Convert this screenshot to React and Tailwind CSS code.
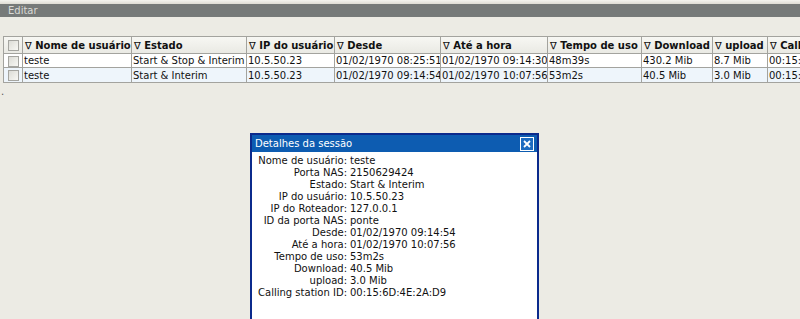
import React from "react";

const cols = [
  { label: "Nome de usuário", w: 109 },
  { label: "Estado", w: 115 },
  { label: "IP do usuário", w: 88 },
  { label: "Desde", w: 106 },
  { label: "Até a hora", w: 107 },
  { label: "Tempo de uso", w: 94 },
  { label: "Download", w: 71 },
  { label: "upload", w: 55 },
  { label: "Calling station ID", w: 130 },
];

const rows = [
  ["teste", "Start & Stop & Interim", "10.5.50.23", "01/02/1970 08:25:51", "01/02/1970 09:14:30", "48m39s", "430.2 Mib", "8.7 Mib", "00:15:6D:4E:2A:D9"],
  ["teste", "Start & Interim", "10.5.50.23", "01/02/1970 09:14:54", "01/02/1970 10:07:56", "53m2s", "40.5 Mib", "3.0 Mib", "00:15:6D:4E:2A:D9"],
];

const details = [
  ["Nome de usuário", "teste"],
  ["Porta NAS", "2150629424"],
  ["Estado", "Start & Interim"],
  ["IP do usuário", "10.5.50.23"],
  ["IP do Roteador", "127.0.0.1"],
  ["ID da porta NAS", "ponte"],
  ["Desde", "01/02/1970 09:14:54"],
  ["Até a hora", "01/02/1970 10:07:56"],
  ["Tempo de uso", "53m2s"],
  ["Download", "40.5 Mib"],
  ["upload", "3.0 Mib"],
  ["Calling station ID", "00:15:6D:4E:2A:D9"],
];

function Box() {
  return (
    <span className="inline-block w-[11px] h-[11px] border border-[#a5a5a0] bg-gradient-to-br from-[#dcdcd6] to-[#f8f8f4] align-middle" />
  );
}

export default function App() {
  return (
    <div
      className="relative w-[800px] h-[319px] overflow-hidden bg-[#ecebe4] text-[10px] text-[#111]"
      style={{ fontFamily: '"DejaVu Sans", Verdana, sans-serif' }}
    >
      <div className="h-[4px] bg-gradient-to-b from-[#f4f4ef] to-[#dedcd4]" />
      <div className="h-[13px] bg-[#767a79] text-[#d9d9d6] pl-[8px] leading-[13px]">Editar</div>
      <div className="pt-[19px] pl-[3px]">
        <table className="border-collapse table-fixed" style={{ width: 19 + cols.reduce((a, c) => a + c.w, 0) }}>
          <colgroup>
            <col className="w-[19px]" />
            {cols.map((c) => (
              <col key={c.label} style={{ width: c.w }} />
            ))}
          </colgroup>
          <thead>
            <tr className="h-[17px] bg-gradient-to-b from-[#f7f7f3] to-[#e9e9e3]">
              <th className="border border-[#a3a39e] p-0 text-center leading-[15px]">
                <Box />
              </th>
              {cols.map((c) => (
                <th
                  key={c.label}
                  className="border border-[#a3a39e] px-[2px] py-0 text-left font-bold whitespace-nowrap overflow-hidden leading-[15px]"
                >
                  <span className="font-normal">∇</span> {c.label}
                </th>
              ))}
            </tr>
          </thead>
          <tbody>
            {rows.map((r, i) => (
              <tr key={i} className={i === 1 ? "h-[15px] bg-[#eef5fb]" : "h-[14px] bg-white"}>
                <td className="border border-[#a3a39e] p-0 text-center leading-[13px]">
                  <Box />
                </td>
                {r.map((v, j) => (
                  <td
                    key={j}
                    className="border border-[#a3a39e] px-[1px] py-0 whitespace-nowrap overflow-hidden leading-[13px]"
                  >
                    {v}
                  </td>
                ))}
              </tr>
            ))}
          </tbody>
        </table>
      </div>
      <div className="pl-[1px] leading-[12px] mt-[3px] text-[#555]">.</div>

      <div className="absolute left-[250px] top-[133px] w-[289px] h-[200px] border-[2px] border-[#0b2a8c] bg-white">
        <div className="h-[17px] bg-[#0d5cb1] flex items-center justify-between pl-[3px] pr-[3px]">
          <span className="text-white leading-[17px]">Detalhes da sessão</span>
          <span className="w-[14px] h-[14px] border border-white flex items-center justify-center bg-[#1d6bc0]">
            <svg width="8" height="8" viewBox="0 0 8 8">
              <path d="M1 1 L7 7 M7 1 L1 7" stroke="white" strokeWidth="1.8" />
            </svg>
          </span>
        </div>
        <div className="pt-[3px]">
          {details.map(([k, v]) => (
            <div key={k} className="flex leading-[12px] whitespace-nowrap">
              <span className="w-[95px] text-right">{k}:</span>
              <span className="pl-[3px]">{v}</span>
            </div>
          ))}
        </div>
      </div>
    </div>
  );
}
